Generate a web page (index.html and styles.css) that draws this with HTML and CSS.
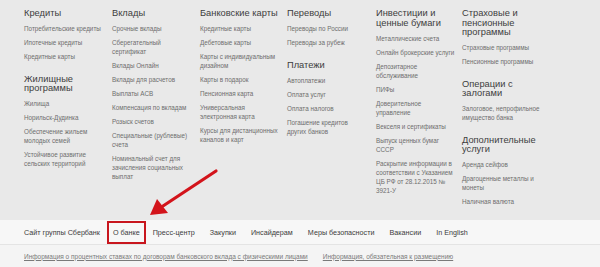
FILE: index.html
```html
<!DOCTYPE html>
<html lang="ru">
<head>
  <meta charset="UTF-8">
  <title>Сбербанк - карта сайта</title>
  <link rel="stylesheet" href="styles.css">
</head>
<body>
  <div class="page">
    <div class="sitemap">
      <div class="col">
        <div class="group">
          <h3>Кредиты</h3>
          <a>Потребительские кредиты</a>
          <a>Ипотечные кредиты</a>
          <a>Кредитные карты</a>
        </div>
        <div class="group">
          <h3>Жилищные программы</h3>
          <a>Жилища</a>
          <a>Норильск-Дудинка</a>
          <a>Обеспечение жильем молодых семей</a>
          <a>Устойчивое развитие сельских территорий</a>
        </div>
      </div>
      <div class="col">
        <div class="group">
          <h3>Вклады</h3>
          <a>Срочные вклады</a>
          <a>Сберегательный сертификат</a>
          <a>Вклады Онлайн</a>
          <a>Вклады для расчетов</a>
          <a>Выплаты АСВ</a>
          <a>Компенсация по вкладам</a>
          <a>Розыск счетов</a>
          <a>Специальные (рублевые) счета</a>
          <a>Номинальный счет для зачисления социальных выплат</a>
        </div>
      </div>
      <div class="col col-wide">
        <div class="group">
          <h3>Банковские карты</h3>
          <a>Кредитные карты</a>
          <a>Дебетовые карты</a>
          <a>Карты с индивидуальным дизайном</a>
          <a>Карты в подарок</a>
          <a>Пенсионная карта</a>
          <a>Универсальная электронная карта</a>
          <a>Курсы для дистанционных каналов и карт</a>
        </div>
      </div>
      <div class="col col-narrow">
        <div class="group">
          <h3>Переводы</h3>
          <a>Переводы по России</a>
          <a>Переводы за рубеж</a>
        </div>
        <div class="group">
          <h3>Платежи</h3>
          <a>Автоплатежи</a>
          <a>Оплата услуг</a>
          <a>Оплата налогов</a>
          <a>Погашение кредитов других банков</a>
        </div>
      </div>
      <div class="col col-invest">
        <div class="group">
          <h3>Инвестиции и ценные бумаги</h3>
          <a>Металлические счета</a>
          <a>Онлайн брокерские услуги</a>
          <a>Депозитарное обслуживание</a>
          <a>ПИФы</a>
          <a>Доверительное<br>управление</a>
          <a>Векселя и сертификаты</a>
          <a>Выпуск ценных бумаг<br>СССР</a>
          <a>Раскрытие информации в соответствии с Указанием ЦБ РФ от 28.12.2015 № 3921-У</a>
        </div>
      </div>
      <div class="col">
        <div class="group">
          <h3>Страховые и пенсионные программы</h3>
          <a>Страховые программы</a>
          <a>Пенсионные программы</a>
        </div>
        <div class="group">
          <h3>Операции с залогами</h3>
          <a>Залоговое, непрофильное имущество банка</a>
        </div>
        <div class="group">
          <h3>Дополнительные услуги</h3>
          <a>Аренда сейфов</a>
          <a>Драгоценные металлы и монеты</a>
          <a>Наличная валюта</a>
        </div>
      </div>
    </div>

    <nav class="footer-nav">
      <a>Сайт группы Сбербанк</a>
      <a class="marked">О банке</a>
      <a>Пресс-центр</a>
      <a>Закупки</a>
      <a>Инсайдерам</a>
      <a>Меры безопасности</a>
      <a>Вакансии</a>
      <a>In English</a>
    </nav>

    <div class="footer-links">
      <a>Информация о процентных ставках по договорам банковского вклада с физическими лицами</a>
      <a>Информация, обязательная к размещению</a>
    </div>

    <svg class="arrow" width="600" height="267" viewBox="0 0 600 267">
      <line x1="216" y1="171" x2="163" y2="206" stroke="#d3141b" stroke-width="3.2" stroke-linecap="round"/>
      <polygon points="150,215 157,199 168,213" fill="#d3141b"/>
    </svg>
  </div>
</body>
</html>
```

FILE: styles.css
```css
body {
  margin: 0;
  font-family: 'Liberation Sans', Arial, sans-serif;
  background: #e9e9e9;
}

.page {
  position: relative;
  width: 600px;
  height: 267px;
  overflow: hidden;
}

.sitemap {
  display: grid;
  grid-template-columns: 88px 88px 87px 89px 86px 88px;
  padding: 9px 0 0 24px;
  height: 211px;
}

.col {
  display: flex;
  flex-direction: column;
  padding-right: 8px;
}

.col-wide {
  padding-right: 4px;
}

.col-narrow {
  padding-right: 10px;
}

.col-invest {
  padding-right: 2px;
}

.group {
  display: flex;
  flex-direction: column;
  margin-bottom: 8.5px;
}

.group h3 {
  margin: 0 0 5.5px;
  font-size: 9.3px;
  line-height: 9.5px;
  font-weight: 400;
  color: #3d3d3d;
}

.group a {
  font-size: 6.3px;
  line-height: 9px;
  color: #6e6e6e;
  margin-bottom: 5px;
}

.footer-nav {
  display: flex;
  align-items: center;
  height: 24px;
  padding-left: 24px;
  background: #f7f7f7;
  border-bottom: 1px solid #e4e4e4;
}

.footer-nav a {
  font-size: 7.2px;
  color: #3c3c3c;
  margin-right: 15px;
}

.footer-nav a:first-child {
  margin-right: 14px;
}

.footer-nav a.marked {
  padding: 5px 4px;
  margin: 0 7px 0 -7px;
  border: 2px solid #c8161e;
}

.footer-links {
  display: flex;
  align-items: center;
  height: 22px;
  padding-left: 24px;
  background: #f4f4f4;
}

.footer-links a {
  font-size: 6.5px;
  color: #7a7a7a;
  text-decoration: underline;
  margin-right: 15px;
}

.arrow {
  position: absolute;
  left: 0;
  top: 0;
  pointer-events: none;
}
```
